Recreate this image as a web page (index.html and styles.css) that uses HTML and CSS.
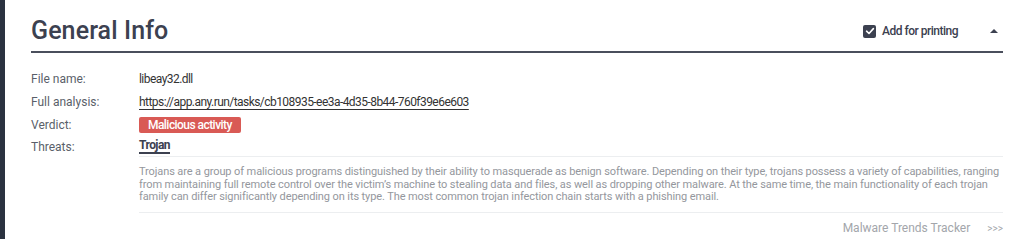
FILE: index.html
```html
<!DOCTYPE html>
<html>
<head>
<meta charset="utf-8">
<link rel="stylesheet" href="styles.css">
</head>
<body>
<div class="page">
  <div class="sidebar"></div>
  <main class="content">
    <header class="head">
      <h1 class="title">General Info</h1>
      <div class="tools">
        <label class="print">
          <span class="check"><svg width="12" height="12" viewBox="0 0 12 12"><path d="M2.6 6.2 L5 8.5 L9.4 3.6" fill="none" stroke="#fff" stroke-width="1.6" stroke-linecap="round" stroke-linejoin="round"/></svg></span>
          <span>Add for printing</span>
        </label>
        <span class="caret"></span>
      </div>
    </header>
    <div class="rows">
      <div class="row"><span class="label">File name:</span><span class="value">libeay32.dll</span></div>
      <div class="row"><span class="label">Full analysis:</span><a class="value link">https://app.any.run/tasks/cb108935-ee3a-4d35-8b44-760f39e6e603</a></div>
      <div class="row"><span class="label">Verdict:</span><span class="badge">Malicious activity</span></div>
      <div class="row threats"><span class="label">Threats:</span><div class="threat-box"><span class="threat">Trojan</span></div></div>
      <div class="desc-row">
        <p class="desc">Trojans are a group of malicious programs distinguished by their ability to masquerade as benign software. Depending on their type, trojans possess a variety of capabilities, ranging from maintaining full remote control over the victim’s machine to stealing data and files, as well as dropping other malware. At the same time, the main functionality of each trojan family can differ significantly depending on its type. The most common trojan infection chain starts with a phishing email.</p>
      </div>
      <div class="tracker"><span>Malware Trends Tracker</span><span class="arrows">&gt;&gt;&gt;</span></div>
    </div>
  </main>
</div>
</body>
</html>
```
FILE: styles.css
```css
* { box-sizing: border-box; }
html, body { margin: 0; padding: 0; background: #fff; }
body { font-family: Roboto, "Liberation Sans", sans-serif; }
.page { display: flex; height: 239px; }
.sidebar { width: 5px; background: #2b3240; flex: none; }
.content { flex: 1; padding: 0 21px 0 26px; }
.head {
  display: flex; justify-content: space-between; align-items: flex-end;
  border-bottom: 2px solid #4a4f5c; height: 53px; padding-bottom: 5px;
}
.title { margin: 0; font-size: 25px; font-weight: 500; color: #3c4150; line-height: 30px; letter-spacing: 0.1px; }
.tools { display: flex; align-items: center; padding-bottom: 8px; }
.print { display: flex; align-items: center; gap: 6px; font-size: 12px; letter-spacing: -0.5px; color: #3c4150; font-weight: 500; }
.check { width: 13px; height: 13px; background: #3c4150; border-radius: 2px; display: flex; align-items: center; justify-content: center; }
.caret { margin-left: 32px; margin-right: 5px; width: 0; height: 0; border-left: 4px solid transparent; border-right: 4px solid transparent; border-bottom: 4px solid #3c4150; }
.rows { padding-top: 14px; }
.row { display: flex; align-items: center; height: 23px; font-size: 12px; }
.label { width: 108px; color: #5a5f6a; flex: none; }
.value { color: #333; letter-spacing: -0.55px; }
.link { text-decoration: underline; text-underline-offset: 3px; color: #333; }
.badge { background: #d95a55; color: #fff; font-weight: 500; padding: 0 9px; height: 16px; line-height: 16px; border-radius: 2px; font-size: 12px; letter-spacing: -0.55px; }
.row.threats { height: 21px; }
.threats .threat-box { flex: 1; border-bottom: 1px solid #eceef0; align-self: stretch; display: flex; align-items: center; padding-top: 1px; }
.threat { font-weight: 700; color: #3c4150; border-bottom: 2px solid #3c4150; line-height: 13px; letter-spacing: -0.55px; }
.desc-row { margin-left: 108px; border-bottom: 1px solid #eceef0; padding: 9px 0 8px; }
.desc { margin: 0; font-size: 11px; line-height: 12.6px; letter-spacing: -0.1px; color: #94979d; }
.tracker { display: flex; justify-content: flex-end; gap: 17px; font-size: 12px; color: #a3a6ab; padding-top: 8px; }
.arrows { font-size: 10px; line-height: 15px; }
```
